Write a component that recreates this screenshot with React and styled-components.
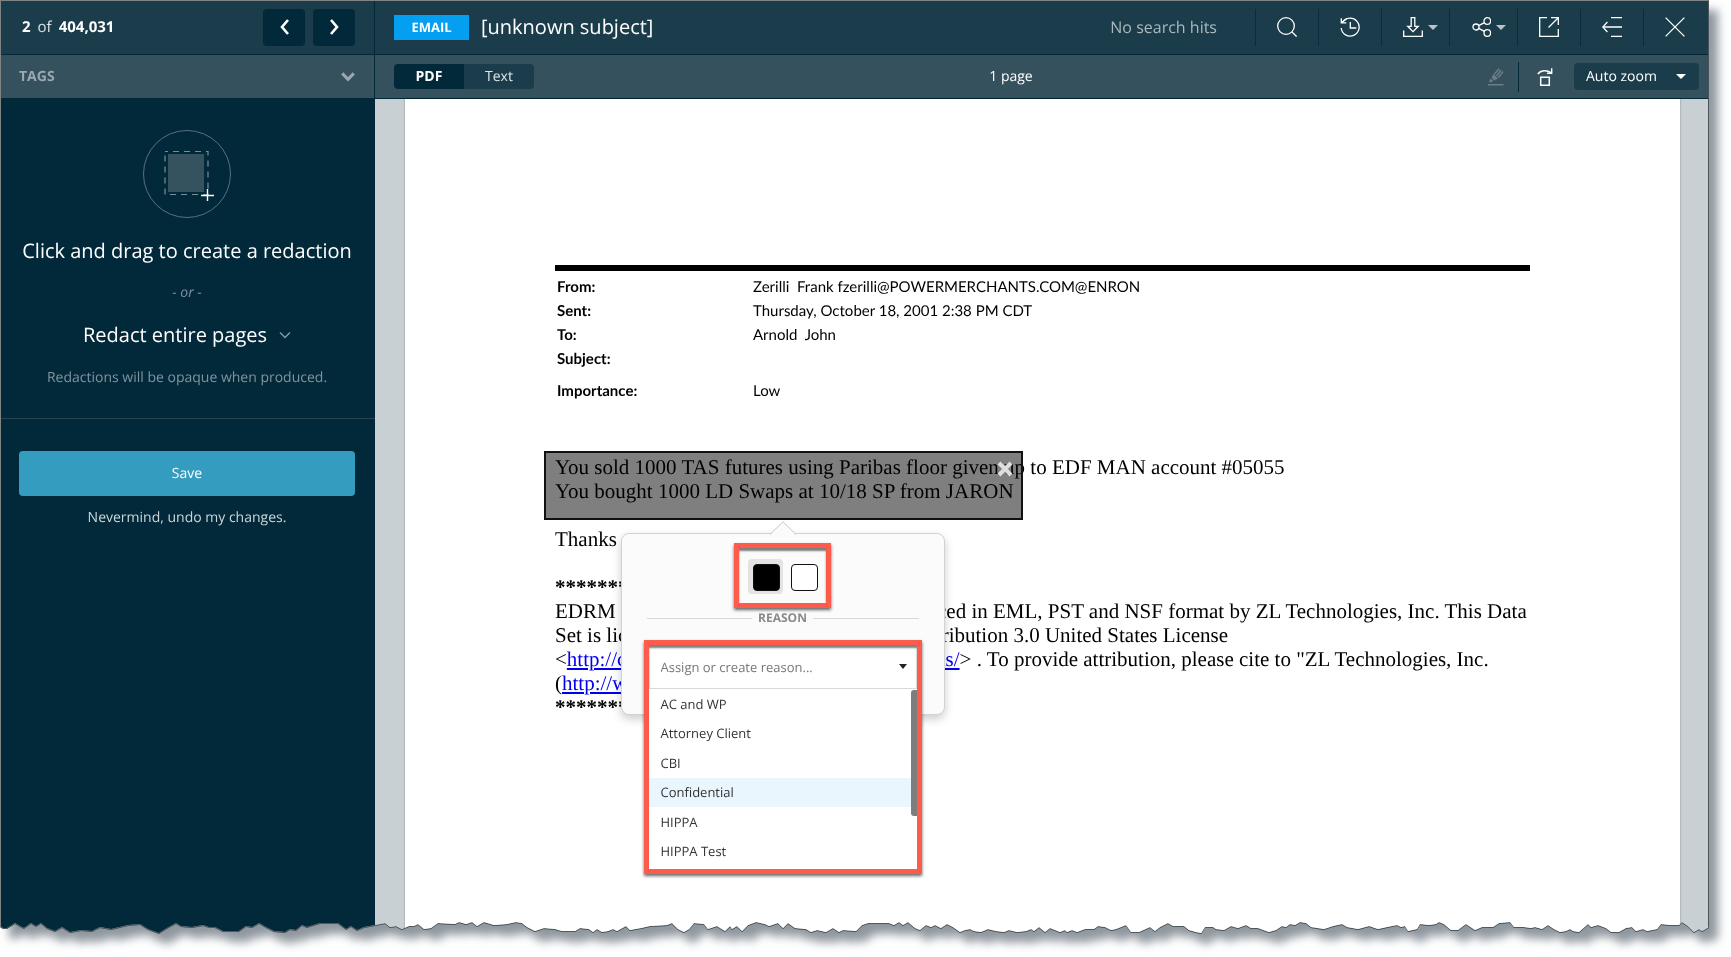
import React, { useState } from 'react';
import styled, { createGlobalStyle } from 'styled-components';

const GlobalStyle = createGlobalStyle`
  * {
    box-sizing: border-box;
  }

  body {
    margin: 0;
    background: #ffffff;
    font-family: 'Open Sans', 'Noto Sans', sans-serif;
    font-size: 14px;
    line-height: 20px;
    text-rendering: geometricPrecision;
  }

  button, input, select {
    font: inherit;
    text-rendering: inherit;
  }

  button {
    border: 0;
    padding: 0;
    background: none;
    color: inherit;
    cursor: pointer;
  }
`;

// [x, depth] pairs of the torn bottom edge, drawn over a 1709 wide sheet
const TEAR_WIDTH = 1709;
const TEAR_DEPTH = 14;
const tear = [
  [0, 5], [3, 7], [7, 7], [15, 2], [20, 5], [24, 7], [31, 2], [36, 5], [41, 2], [47, 7], [55, 10], [62, 6],
  [70, 11], [81, 9], [92, 10], [100, 6], [111, 8], [128, 4], [140, 3], [148, 8], [159, 12], [167, 7], [176, 2],
  [181, 5], [192, 6], [203, 4], [209, 6], [215, 6], [223, 10], [239, 10], [246, 5], [252, 6], [259, 2], [266, 6],
  [274, 10], [285, 11], [290, 8], [296, 9], [302, 4], [307, 6], [320, 2], [338, 2], [346, 8], [351, 5], [357, 9],
  [364, 6], [375, 4], [385, 2], [390, 6], [396, 5], [402, 8], [409, 5], [414, 5], [418, 3], [424, 8], [431, 7],
  [438, 2], [455, 3], [459, 1], [466, 3], [472, 1], [477, 5], [484, 1], [494, 4], [507, 3], [516, 1], [522, 2],
  [527, 6], [535, 10], [544, 7], [555, 8], [562, 10], [575, 10], [580, 7], [589, 8], [593, 11], [597, 8],
  [602, 11], [608, 10], [613, 8], [617, 10], [626, 5], [630, 9], [641, 7], [650, 5], [667, 4], [672, 2], [678, 8],
  [684, 11], [689, 8], [694, 2], [704, 3], [708, 8], [717, 5], [725, 10], [730, 5], [732, 8], [737, 5], [742, 10],
  [748, 4], [756, 1], [765, 3], [769, 5], [778, 2], [783, 7], [788, 2], [795, 7], [806, 8], [811, 11], [817, 9],
  [826, 11], [833, 7], [839, 11], [843, 9], [856, 10], [862, 4], [868, 2], [889, 2], [894, 4], [899, 1], [903, 4],
  [908, 1], [915, 7], [920, 9], [926, 4], [931, 6], [935, 4], [941, 7], [947, 3], [953, 6], [960, 11], [965, 9],
  [970, 8], [974, 10], [981, 11], [988, 8], [996, 10], [1004, 11], [1009, 9], [1017, 11], [1026, 10], [1031, 8],
  [1034, 10], [1039, 6], [1045, 11], [1050, 7], [1060, 11], [1065, 9], [1067, 11], [1072, 9], [1077, 11],
  [1085, 8], [1094, 8], [1098, 5], [1105, 6], [1111, 9], [1116, 8], [1126, 4], [1131, 11], [1139, 11], [1150, 6],
  [1155, 10], [1160, 6], [1168, 2], [1173, 5], [1184, 5], [1189, 9], [1196, 11], [1201, 12], [1205, 6], [1213, 6],
  [1216, 8], [1224, 9], [1231, 5], [1238, 7], [1246, 4], [1251, 7], [1258, 7], [1269, 11], [1276, 9], [1282, 5],
  [1286, 6], [1290, 3], [1295, 4], [1300, 1], [1306, 2], [1311, 6], [1324, 8], [1333, 5], [1342, 3], [1347, 6],
  [1358, 8], [1369, 5], [1378, 8], [1387, 6], [1397, 4], [1401, 6], [1405, 5], [1408, 10], [1417, 8], [1420, 3],
  [1429, 4], [1436, 3], [1439, 1], [1444, 3], [1451, 9], [1458, 9], [1466, 3], [1475, 9], [1482, 6], [1493, 6],
  [1499, 2], [1510, 1], [1514, 6], [1524, 6], [1531, 7], [1535, 6], [1542, 8], [1548, 4], [1554, 8], [1560, 11],
  [1566, 10], [1570, 8], [1573, 10], [1579, 11], [1588, 3], [1591, 6], [1598, 4], [1606, 7], [1611, 11],
  [1619, 11], [1626, 7], [1632, 6], [1636, 10], [1643, 8], [1647, 10], [1657, 8], [1661, 3], [1670, 4], [1679, 4],
  [1682, 1], [1688, 5], [1694, 11], [1699, 8], [1702, 10], [1709, 6]
];

const tornEdge = tear
  .map(([x, d]) => `${((x / TEAR_WIDTH) * 100).toFixed(2)}% calc(100% - ${TEAR_DEPTH - d}px)`)
  .reverse()
  .join(', ');

const Sheet = styled.div`
  padding: 0 22px 22px 0;
  overflow: hidden;
  filter: drop-shadow(0 1px 0 #50585c) drop-shadow(9px 10px 5px rgba(31, 47, 61, 0.5));
`;

const Frame = styled.div`
  display: grid;
  grid-template-columns: 374px 1fr;
  min-height: calc(100vh - 22px);
  border: 1px solid #7f8482;
  border-right-color: #4c555a;
  border-bottom: 0;
  background: #c9d0d4;
  clip-path: polygon(0 0, 100% 0, ${tornEdge});
`;

const Sidebar = styled.aside`
  display: flex;
  flex-direction: column;
  background: #02293a;
  color: #ffffff;
`;

const Pager = styled.div`
  display: flex;
  align-items: center;
  gap: 8px;
  height: 54px;
  padding: 0 19px 1px 21px;
  background: #1b3c4b;
  border-right: 1px solid #02293a;
  border-bottom: 1px solid #02293a;
`;

const Counter = styled.div`
  flex: 1;
  color: #dfe5e8;
  font-size: 15px;

  strong {
    color: #ffffff;
  }

  span {
    margin: 0 7px;
  }
`;

const PagerButton = styled.button`
  display: flex;
  align-items: center;
  justify-content: center;
  width: 42px;
  height: 37px;
  border-radius: 4px;
  background: #02293a;
`;

const TagsToggle = styled.button`
  display: flex;
  align-items: center;
  justify-content: space-between;
  height: 44px;
  padding: 0 19px 0 18px;
  background: #35515e;
  border-right: 1px solid #02293a;
  border-bottom: 1px solid #02293a;
  color: #9aa8af;
  font-weight: 700;
`;

const RedactPanel = styled.div`
  display: flex;
  flex-direction: column;
  align-items: center;
  padding: 31px 20px 30px 18px;
  border-bottom: 1px solid #2f4252;
  text-align: center;
`;

const PanelTitle = styled.h2`
  margin: 19px 0 18px;
  font-size: 20px;
  font-weight: 400;
  line-height: 28px;
  white-space: nowrap;
`;

const OrText = styled.em`
  color: #80949d;
`;

const PagesButton = styled.button`
  display: flex;
  align-items: center;
  gap: 12px;
  margin: 18px 0 19px;
  font-size: 20px;
  line-height: 28px;
`;

const Note = styled.p`
  margin: 0;
  color: #80949d;
`;

const SaveArea = styled.div`
  display: flex;
  flex-direction: column;
  align-items: center;
  gap: 12px;
  padding: 32px 20px 32px 18px;
`;

const SaveButton = styled.button`
  width: 100%;
  height: 45px;
  border-radius: 4px;
  background: #349cbe;
  color: #ffffff;
`;

const UndoButton = styled.button`
  color: #ccd6da;
`;

const Main = styled.main`
  display: flex;
  flex-direction: column;
  min-width: 0;
`;

const Toolbar = styled.header`
  display: flex;
  align-items: center;
  height: 54px;
  padding: 0 2px 1px 19px;
  background: #1b3c4b;
  border-bottom: 1px solid #02293a;
  color: #ffffff;
`;

const TypeBadge = styled.span`
  width: 75px;
  background: #059ff2;
  font-size: 13px;
  font-weight: 700;
  line-height: 25px;
  text-align: center;
`;

const Subject = styled.h1`
  flex: 1;
  margin: 0 0 0 12px;
  font-size: 20px;
  font-weight: 400;
  line-height: 28px;
  white-space: nowrap;
`;

const Hits = styled.span`
  margin-right: 38px;
  color: #aab7bd;
  font-size: 16px;
  white-space: nowrap;
`;

const ToolButton = styled.button`
  display: flex;
  align-items: center;
  gap: 5px;
  height: 37px;
  padding: 0 ${({ $menu }) => ($menu ? '11px' : '21px')} 0 21px;
  border-left: 1px solid #0a2c3c;
`;

const ViewBar = styled.div`
  display: flex;
  align-items: center;
  justify-content: space-between;
  height: 44px;
  padding: 0 9px 0 19px;
  background: #35515e;
  border-bottom: 1px solid #02293a;
  color: #ffffff;
`;

const Tabs = styled.div`
  display: flex;
  border-radius: 4px;
  overflow: hidden;
`;

const Tab = styled.button`
  width: 70px;
  height: 25px;
  background: ${({ $active }) => ($active ? '#02293a' : '#1b3c4b')};
  color: ${({ $active }) => ($active ? '#ffffff' : '#dfe5e8')};
  font-weight: ${({ $active }) => ($active ? 700 : 400)};
`;

const ViewTools = styled.div`
  display: flex;
  align-items: center;
`;

const ViewTool = styled.button`
  display: flex;
  color: ${({ disabled }) => (disabled ? '#6b7e88' : '#ffffff')};
`;

const Divider = styled.span`
  width: 1px;
  height: 30px;
  margin: 0 18px 0 14px;
  background: #02293a;
`;

const ZoomBox = styled.div`
  position: relative;
  margin-left: 21px;

  svg {
    position: absolute;
    top: 11px;
    right: 13px;
    pointer-events: none;
  }
`;

const ZoomSelect = styled.select`
  appearance: none;
  width: 125px;
  height: 27px;
  padding: 0 12px;
  border: 0;
  border-radius: 4px;
  background: #1b3c4b;
  color: #ffffff;
`;

const Viewer = styled.div`
  flex: 1;
  display: flex;
  padding: 0 28px 0 30px;
  background: #c9d0d4;
`;

const Page = styled.article`
  flex: 1;
  min-width: 0;
  padding: 166px 150px 120px;
  background: #ffffff;
  box-shadow: 0 0 2px rgba(0, 0, 0, 0.35);
  color: #000000;
`;

const Rule = styled.hr`
  height: 6px;
  margin: 0;
  border: 0;
  background: #000000;
`;

const MetaTable = styled.table`
  margin-top: 4px;
  border-collapse: collapse;
  font-family: Lato, 'Open Sans', sans-serif;
  font-size: 15px;
  line-height: 24px;

  th {
    width: 198px;
    padding: 0 0 0 2px;
    text-align: left;
    font-weight: 700;
  }

  td {
    padding: 0;
    white-space: pre;
  }

  tr:last-child > * {
    padding-top: 8px;
  }
`;

const Letter = styled.div`
  position: relative;
  margin-top: 52px;
  font-family: 'Liberation Serif', 'Times New Roman', serif;
  font-size: 21px;
  line-height: 24px;

  p {
    margin: 0 0 24px;
  }

  a {
    color: #0000ee;
  }
`;

const Redaction = styled.div`
  position: absolute;
  top: -4px;
  left: -11px;
  width: 479px;
  height: 69px;
  border: 2px solid #111111;
  background: rgba(0, 0, 0, 0.5);
  font-family: 'Open Sans', sans-serif;
  font-size: 13px;
`;

const RemoveButton = styled.button`
  position: absolute;
  top: 8px;
  right: 8px;
  display: flex;
`;

const Popover = styled.section`
  position: absolute;
  top: 80px;
  left: 50%;
  width: 324px;
  height: 182px;
  margin-left: -163px;
  padding: 9px 22px;
  border: 1px solid #d2d2d2;
  border-radius: 8px;
  background: #fbfbfb;
  box-shadow: 0 4px 10px rgba(0, 0, 0, 0.2);
`;

const Pointer = styled.svg`
  position: absolute;
  top: -13px;
  left: 148px;
`;

const Callout = styled.div`
  width: ${({ $fit }) => ($fit ? 'fit-content' : 'auto')};
  margin: 0 auto;
  border: 5px solid #fd5b4b;
  box-shadow: 0 2px 3px rgba(0, 0, 0, 0.6), inset 0 3px 2px rgba(0, 0, 0, 0.5);
`;

const Swatches = styled.div`
  display: flex;
  gap: 3px;
  padding: 11px 5px 9px 9px;
`;

const Swatch = styled.input`
  appearance: none;
  width: 35px;
  height: 35px;
  margin: 0;
  padding: 5px;
  border-radius: 4px;

  &:checked {
    background: #e3e3e3;
  }

  &::before {
    content: '';
    display: block;
    width: 25px;
    height: 25px;
    border: 1px solid #111111;
    border-radius: 4px;
    background: ${({ $color }) => $color};
  }
`;

const ReasonLabel = styled.label`
  display: flex;
  align-items: center;
  gap: 6px;
  margin: 0 3px 12px;
  color: #8a8a8a;
  font-size: 12px;
  font-weight: 700;
  line-height: 20px;

  &::before,
  &::after {
    content: '';
    flex: 1;
    height: 1px;
    background: #d9d9d9;
  }
`;

const ReasonField = styled.div`
  display: flex;
  align-items: center;
  height: 44px;
  padding: 0 10px 0 12px;
  border-bottom: 1px solid #d9d9d9;
  background: #ffffff;
  box-shadow: inset 0 3px 2px rgba(0, 0, 0, 0.5);
`;

const ReasonInput = styled.input`
  flex: 1;
  min-width: 0;
  padding: 0;
  border: 0;
  outline: 0;
  background: none;
  color: #333333;

  &::placeholder {
    color: #777777;
    opacity: 1;
  }
`;

const ReasonList = styled.div`
  position: relative;
  display: grid;
  grid-auto-rows: 1fr;
  height: 180px;
  padding: 0 0 3px;
  background: #ffffff;
`;

const ReasonOption = styled.button`
  padding: 0 12px;
  background: ${({ $active }) => ($active ? '#eaf6fd' : '#ffffff')};
  color: #333333;
  line-height: 18px;
  text-align: left;
`;

const ScrollThumb = styled.div`
  position: absolute;
  top: 1px;
  right: 0;
  width: 6px;
  height: 126px;
  border-radius: 3px 0 0 3px;
  background: #7d7d7d;
`;

const Icon = ({ children, size = 20, ...rest }) => (
  <svg
    width={size}
    height={size}
    viewBox="0 0 20 20"
    fill="none"
    stroke="currentColor"
    strokeWidth="1.3"
    aria-hidden="true"
    {...rest}
  >
    {children}
  </svg>
);

const Caret = ({ color = '#b9c3c8', width = 10 }) => (
  <svg width={width} height="5" viewBox="0 0 10 5" preserveAspectRatio="none" aria-hidden="true">
    <path d="M0 0h10L5 5z" fill={color} />
  </svg>
);

const SearchIcon = () => (
  <Icon>
    <circle cx="9" cy="9" r="8.3" />
    <path d="M15 15l4.6 4.6" />
  </Icon>
);

const HistoryIcon = () => (
  <Icon>
    <path d="M2.6 5.2A9 9 0 1 1 1.2 11" />
    <path d="M1.3 1.2v4.6h5M1.3 5.8l5.6-4.2" />
    <path d="M10.3 5v6h6" />
  </Icon>
);

const DownloadIcon = () => (
  <Icon>
    <path d="M.7 13.5v5.8h18.6v-5.8" />
    <path d="M8.2.7h3.6v8.6h3.4L10 14.6 4.8 9.3h3.4z" />
  </Icon>
);

const ShareIcon = () => (
  <Icon>
    <circle cx="5" cy="10" r="3" />
    <circle cx="16.3" cy="4" r="3.3" />
    <circle cx="16.3" cy="16" r="3.3" />
    <path d="M7.7 8.6l5.7-3M7.7 11.4l5.7 3" />
  </Icon>
);

const OpenIcon = () => (
  <Icon>
    <path d="M8 .7H.7v18.6h18.6V12" />
    <path d="M9.5 10.5L19 1M12 .7h7.3V8" />
  </Icon>
);

const CollapseIcon = () => (
  <Icon>
    <path d="M9 .7h11M.8 10H20M9 19.3h11" />
    <path d="M5.4 5L.8 10l4.6 5" />
  </Icon>
);

const CloseIcon = () => (
  <Icon>
    <path d="M.6.6l18.8 18.8M19.4.6L.6 19.4" />
  </Icon>
);

const tools = [
  { label: 'Search', icon: <SearchIcon /> },
  { label: 'History', icon: <HistoryIcon /> },
  { label: 'Download', icon: <DownloadIcon />, menu: true },
  { label: 'Share', icon: <ShareIcon />, menu: true },
  { label: 'Open in new window', icon: <OpenIcon /> },
  { label: 'Collapse', icon: <CollapseIcon /> },
  { label: 'Close', icon: <CloseIcon /> }
];

const meta = [
  ['From:', 'Zerilli  Frank fzerilli@POWERMERCHANTS.COM@ENRON'],
  ['Sent:', 'Thursday, October 18, 2001 2:38 PM CDT'],
  ['To:', 'Arnold  John'],
  ['Subject:', ''],
  ['Importance:', 'Low']
];

const reasons = ['AC and WP', 'Attorney Client', 'CBI', 'Confidential', 'HIPPA', 'HIPPA Test'];

const RedactionPopover = () => {
  const [color, setColor] = useState('#000000');
  const [reason, setReason] = useState('');
  const [active, setActive] = useState('Confidential');

  return (
    <Popover>
      <Pointer width="26" height="14" viewBox="0 0 26 14" aria-hidden="true">
        <path d="M0 13.5L13 .7l13 12.8" fill="#fbfbfb" stroke="#c4c4c4" />
      </Pointer>
      <Callout $fit>
        <Swatches>
          {['#000000', '#ffffff'].map((value) => (
            <Swatch
              key={value}
              type="radio"
              name="redaction-color"
              aria-label={value === '#000000' ? 'Black' : 'White'}
              $color={value}
              checked={color === value}
              onChange={() => setColor(value)}
            />
          ))}
        </Swatches>
      </Callout>
      <ReasonLabel htmlFor="reason">REASON</ReasonLabel>
      <Callout>
        <ReasonField>
          <ReasonInput
            id="reason"
            placeholder="Assign or create reason..."
            value={reason}
            onChange={(e) => setReason(e.target.value)}
          />
          <Caret color="#222222" width={8} />
        </ReasonField>
        <ReasonList>
          {reasons.map((item) => (
            <ReasonOption
              key={item}
              $active={item === active}
              onMouseEnter={() => setActive(item)}
              onClick={() => setReason(item)}
            >
              {item}
            </ReasonOption>
          ))}
          <ScrollThumb />
        </ReasonList>
      </Callout>
    </Popover>
  );
};

const App = () => {
  const [tab, setTab] = useState('PDF');

  return (
    <>
      <GlobalStyle />
      <Sheet>
        <Frame>
          <Sidebar>
            <Pager>
              <Counter>
                <strong>2</strong>
                <span>of</span>
                <strong>404,031</strong>
              </Counter>
              <PagerButton aria-label="Previous document">
                <svg width="9" height="16" viewBox="0 0 9 16" fill="none" stroke="#fff" strokeWidth="2.6">
                  <path d="M8 1L2 8l6 7" />
                </svg>
              </PagerButton>
              <PagerButton aria-label="Next document">
                <svg width="9" height="16" viewBox="0 0 9 16" fill="none" stroke="#fff" strokeWidth="2.6">
                  <path d="M1 1l6 7-6 7" />
                </svg>
              </PagerButton>
            </Pager>
            <TagsToggle>
              TAGS
              <svg width="14" height="10" viewBox="0 0 14 10" fill="none" stroke="#9aa8af" strokeWidth="3">
                <path d="M1.2 1.4L7 7.4l5.8-6" />
              </svg>
            </TagsToggle>
            <RedactPanel>
              <svg width="88" height="88" viewBox="0 0 88 88" fill="none" aria-hidden="true">
                <circle cx="44" cy="44" r="43.5" stroke="#5a717c" />
                <path d="M25 24h36v38H25z" fill="#35535f" />
                <path
                  d="M22 21.5h43v43H22z"
                  stroke="#7b8f98"
                  strokeWidth="1.2"
                  strokeDasharray="6 5"
                  strokeDashoffset="3"
                />
                <path d="M64.500 59v12M58 65.500h13" stroke="#ffffff" strokeWidth="1.4" />
              </svg>
              <PanelTitle>Click and drag to create a redaction</PanelTitle>
              <OrText>- or -</OrText>
              <PagesButton>
                Redact entire pages
                <svg width="12" height="8" viewBox="0 0 12 8" fill="none" stroke="#8496a0" strokeWidth="1.5">
                  <path d="M1 1.500l5 5 5-5" />
                </svg>
              </PagesButton>
              <Note>Redactions will be opaque when produced.</Note>
            </RedactPanel>
            <SaveArea>
              <SaveButton>Save</SaveButton>
              <UndoButton>Nevermind, undo my changes.</UndoButton>
            </SaveArea>
          </Sidebar>

          <Main>
            <Toolbar>
              <TypeBadge>EMAIL</TypeBadge>
              <Subject>[unknown subject]</Subject>
              <Hits>No search hits</Hits>
              {tools.map(({ label, icon, menu }) => (
                <ToolButton key={label} aria-label={label} $menu={menu}>
                  {icon}
                  {menu && <Caret />}
                </ToolButton>
              ))}
            </Toolbar>
            <ViewBar>
              <Tabs>
                {['PDF', 'Text'].map((name) => (
                  <Tab key={name} $active={tab === name} onClick={() => setTab(name)}>
                    {name}
                  </Tab>
                ))}
              </Tabs>
              <span>1 page</span>
              <ViewTools>
                <ViewTool disabled aria-label="Highlight">
                  <svg width="16" height="18" viewBox="0 0 16 18" aria-hidden="true">
                    <path d="M0 16h15.500v1.500H0z" fill="currentColor" />
                    <path d="M1 14l1.500-3.500 2.500 2.300L4 14z" fill="currentColor" />
                    <path d="M3.500 9.500l2-3.500 4.500 4.500-4 2z" fill="currentColor" />
                    <path d="M6.500 6L11 .8M10.500 9.500l4.500-6M8.500 8L13 2" stroke="currentColor" strokeWidth="1.500" />
                  </svg>
                </ViewTool>
                <Divider />
                <ViewTool aria-label="Rotate">
                  <svg width="16" height="18" viewBox="0 0 16 18" fill="none" stroke="currentColor" aria-hidden="true">
                    <path d="M3.700 9.200h8.600v8H3.700z" strokeWidth="1.500" />
                    <path d="M.8 6C3.500 2.300 9.500 1.600 14.300 4.800" strokeWidth="1.500" />
                    <path d="M14.700.3v5H10" strokeWidth="1.400" />
                  </svg>
                </ViewTool>
                <ZoomBox>
                  <ZoomSelect aria-label="Zoom" defaultValue="auto">
                    <option value="auto">Auto zoom</option>
                    <option value="100">100%</option>
                  </ZoomSelect>
                  <Caret color="#ffffff" />
                </ZoomBox>
              </ViewTools>
            </ViewBar>
            <Viewer>
              <Page>
                <Rule />
                <MetaTable>
                  <tbody>
                    {meta.map(([name, value]) => (
                      <tr key={name}>
                        <th scope="row">{name}</th>
                        <td>{value}</td>
                      </tr>
                    ))}
                  </tbody>
                </MetaTable>
                <Letter>
                  <p>
                    You sold 1000 TAS futures using Paribas floor given up to EDF MAN account #05055
                    <br />
                    You bought 1000 LD Swaps at 10/18 SP from JARON
                  </p>
                  <p>Thanks</p>
                  <p>
                    <strong>********</strong>
                    <br />
                    EDRM Enron Email Data Set has been produced in EML, PST and NSF format by ZL Technologies, Inc.
                    This Data
                    <br />
                    Set is licensed under a Creative Commons Attribution 3.0 United States License
                    <br />
                    &lt;<a href="#license">http://creativecommons.org/licenses/by/3.0/us/</a>&gt; . To provide
                    attribution, please cite to "ZL Technologies, Inc.
                    <br />
                    (<a href="#source">http://www.zlti.com</a>)."
                    <br />
                    <strong>********</strong>
                  </p>
                  <Redaction>
                    <RemoveButton aria-label="Remove redaction">
                      <svg width="16" height="16" viewBox="0 0 16 16" stroke="#dedede" strokeWidth="4">
                        <path d="M2 2l12 12M14 2L2 14" />
                      </svg>
                    </RemoveButton>
                    <RedactionPopover />
                  </Redaction>
                </Letter>
              </Page>
            </Viewer>
          </Main>
        </Frame>
      </Sheet>
    </>
  );
};

export default App;
